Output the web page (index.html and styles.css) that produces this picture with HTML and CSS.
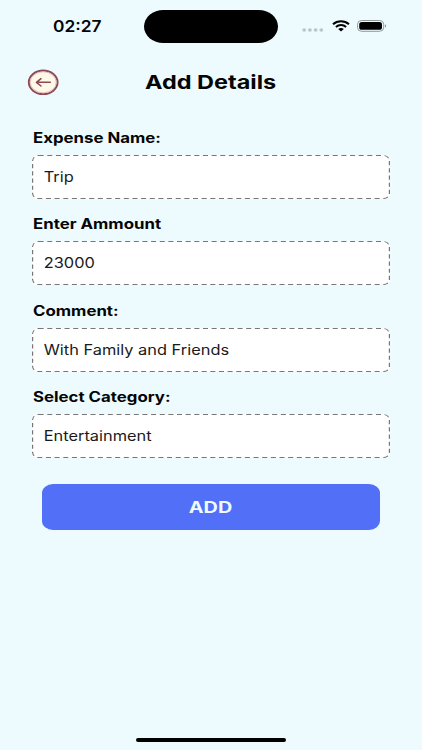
FILE: index.html
```html
<!DOCTYPE html>
<html lang="en">
<head>
    <meta charset="UTF-8">
    <meta name="viewport" content="width=device-width, initial-scale=1.0">
    <title>Add Details</title>
    <link rel="stylesheet" href="styles.css">
</head>
<body>
    <div class="screen">
        <div class="status-bar">
            <div class="time"><span class="wide">02:27</span></div>
            <div class="island"></div>
            <div class="status-icons">
                <svg class="signal" width="22" height="4" viewBox="0 0 22 4">
                    <g fill="#b9c6c9">
                        <ellipse cx="2.2" cy="2" rx="1.9" ry="1.7"/>
                        <ellipse cx="7.9" cy="2" rx="1.9" ry="1.7"/>
                        <ellipse cx="13.6" cy="2" rx="1.9" ry="1.7"/>
                        <ellipse cx="19.3" cy="2" rx="1.9" ry="1.7"/>
                    </g>
                </svg>
                <svg class="wifi" width="18" height="12" viewBox="0 0 18 12">
                    <g fill="none" stroke="#000" stroke-width="2">
                        <path d="M1 4.2C5.5 0.1 12.5 0.1 17 4.2"/>
                        <path d="M3.9 7C6.8 4.4 11.2 4.4 14.1 7"/>
                    </g>
                    <path d="M6.2 9.1C7.8 7.7 10.2 7.7 11.8 9.1L9 11.5Z"/>
                </svg>
                <svg class="battery" width="30" height="12" viewBox="0 0 30 12">
                    <rect x="0.5" y="0.5" width="26.2" height="10.8" rx="4" fill="none" stroke="#8f989a"/>
                    <rect x="2.2" y="2" width="22.8" height="7.8" rx="2.6"/>
                    <path d="M28 4.2C29.6 4.8 29.6 7 28 7.6Z" fill="#8f989a"/>
                </svg>
            </div>
        </div>

        <div class="header">
            <button class="back-btn" aria-label="Back">
                <svg width="32" height="27" viewBox="0 0 32 27">
                    <ellipse cx="16.2" cy="13.3" rx="14.4" ry="11.8" fill="#fff8e8" stroke="#8c4a58" stroke-width="1.9"/>
                    <ellipse cx="16.2" cy="13.3" rx="13" ry="10.5" fill="none" stroke="#dcaeb0" stroke-width="0.8"/>
                    <path d="M23.3 13.3H9.6M14 9.6L9.4 13.3L14 17" fill="none" stroke="#8c4a50" stroke-width="1.5" stroke-linecap="round" stroke-linejoin="round"/>
                </svg>
            </button>
            <h1><span class="wide">Add Details</span></h1>
        </div>

        <form class="form">
            <div class="field">
                <label for="name"><span class="wide">Expense Name:</span></label>
                <div class="input-box">
                    <svg class="outline" viewBox="0 0 298 44" preserveAspectRatio="none"><rect x="0.5" y="0.5" width="297" height="43" rx="5"/></svg>
                    <input type="text" id="name" value="Trip">
                </div>
            </div>
            <div class="field">
                <label for="amount"><span class="wide">Enter Ammount</span></label>
                <div class="input-box">
                    <svg class="outline" viewBox="0 0 298 44" preserveAspectRatio="none"><rect x="0.5" y="0.5" width="297" height="43" rx="5"/></svg>
                    <input type="text" id="amount" value="23000">
                </div>
            </div>
            <div class="field">
                <label for="comment"><span class="wide">Comment:</span></label>
                <div class="input-box">
                    <svg class="outline" viewBox="0 0 298 44" preserveAspectRatio="none"><rect x="0.5" y="0.5" width="297" height="43" rx="5"/></svg>
                    <input type="text" id="comment" value="With Family and Friends">
                </div>
            </div>
            <div class="field">
                <label for="category"><span class="wide">Select Category:</span></label>
                <div class="input-box">
                    <svg class="outline" viewBox="0 0 298 44" preserveAspectRatio="none"><rect x="0.5" y="0.5" width="297" height="43" rx="5"/></svg>
                    <input type="text" id="category" value="Entertainment">
                </div>
            </div>
            <button type="button" class="add-btn"><span class="wide">ADD</span></button>
        </form>

        <div class="home-bar"></div>
    </div>
</body>
</html>
```

FILE: styles.css
```css
* {
    margin: 0;
    padding: 0;
    box-sizing: border-box;
    font-family: Inter, 'Liberation Sans', sans-serif;
}

body {
    background-color: #edfbff;
}

.screen {
    width: 422px;
    height: 750px;
    display: flex;
    flex-direction: column;
    overflow: hidden;
    color: #050505;
}

/* wide letterforms */
.wide {
    display: inline-block;
    transform: scaleX(1.2);
    transform-origin: left center;
}

.status-bar {
    height: 52px;
    display: grid;
    grid-template-columns: 144px 134px 144px;
    align-items: center;
}

.time {
    padding-left: 53px;
    font-size: 15.5px;
    font-weight: 600;
}

.time .wide {
    transform: scaleX(1.12);
}

.island {
    height: 33px;
    margin-top: 1px;
    border-radius: 20px / 17px;
    background-color: #000;
}

.status-icons {
    display: flex;
    align-items: center;
    padding-left: 24px;
}

.signal {
    margin-top: 8px;
}

.wifi {
    margin-left: 7.5px;
}

.battery {
    margin-left: 7.5px;
}

.header {
    height: 60px;
    display: grid;
    grid-template-columns: 118px 1fr;
    align-items: center;
    padding-left: 27px;
}

.back-btn {
    width: 32px;
    height: 27px;
    border: none;
    background: none;
    cursor: pointer;
}

.back-btn svg {
    display: block;
}

.header h1 {
    font-size: 19px;
    font-weight: 700;
}

.header .wide {
    transform: scaleX(1.235);
}

.form {
    padding: 16px 32px 0;
}

.field {
    height: 86.4px;
}

.field label {
    display: block;
    height: 27px;
    padding-left: 1px;
    font-size: 14px;
    font-weight: 700;
    line-height: 20px;
}

.input-box {
    position: relative;
    width: 358px;
    height: 44px;
    border-radius: 6px 6px 5px 5px;
    background-color: #fff;
    overflow: hidden;
}

.outline {
    position: absolute;
    inset: 0;
    width: 100%;
    height: 100%;
    fill: none;
    stroke: #777;
    stroke-width: 1;
    stroke-dasharray: 4.2 3;
    pointer-events: none;
}

.input-box input {
    width: 290px;
    height: 43px;
    padding-left: 10px;
    border: none;
    outline: none;
    background: transparent;
    color: #1a1a1a;
    font-size: 14px;
    transform: scaleX(1.17);
    transform-origin: left center;
}

.add-btn {
    display: block;
    width: 338px;
    height: 46px;
    margin: 10.4px 0 0 10px;
    border: none;
    border-radius: 11px / 9px;
    background-color: #526ff8;
    color: #edfbff;
    font-size: 16px;
    font-weight: 700;
    cursor: pointer;
}

.add-btn .wide {
    transform: scaleX(1.24);
    transform-origin: center;
}

.home-bar {
    width: 150px;
    height: 4px;
    margin: auto auto 8px;
    border-radius: 3px;
    background-color: #000;
}
```
